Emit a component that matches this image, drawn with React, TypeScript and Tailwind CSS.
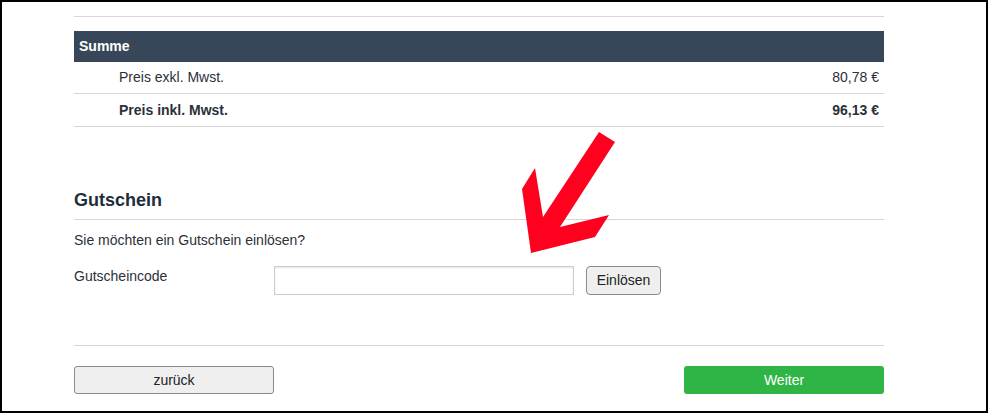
import React from 'react';

const font = { fontFamily: '"Liberation Sans", Arial, Helvetica, sans-serif' };

function Arrow() {
  return (
    <svg
      className="absolute left-0 top-0 pointer-events-none"
      width={991}
      height={413}
      viewBox="0 0 991 413"
    >
      <polygon
        fill="#ff001e"
        points="599,132 615,142 560,227 609,215 595,237 531,253 522,189 535,168 543,217"
      />
    </svg>
  );
}

export default function App() {
  return (
    <div className="relative w-[991px] h-[413px] bg-white text-[#2b3039]" style={font}>
      <div className="w-[988px] h-[413px] border-2 border-black">
        <div className="ml-[72px] w-[810px]">
          {/* Summary table */}
          <div className="mt-[14px] border-t border-[#d6d6d6]" />
          <div className="mt-[14px] h-[31px] bg-[#374759] flex items-center px-[5px]">
            <span className="text-[14px] font-bold text-white">Summe</span>
          </div>
          <div className="h-[32px] border-b border-[#d6d6d6] flex items-center justify-between pl-[45px] pr-[5px] text-[14px]">
            <span>Preis exkl. Mwst.</span>
            <span>80,78 €</span>
          </div>
          <div className="h-[33px] border-b border-[#d6d6d6] flex items-center justify-between pl-[45px] pr-[5px] text-[14px] font-bold">
            <span>Preis inkl. Mwst.</span>
            <span>96,13 €</span>
          </div>

          {/* Voucher */}
          <h2 className="mt-[61px] pb-[7px] border-b border-[#d6d6d6] text-[18px] leading-[24px] font-bold text-[#1f2d3b]">
            Gutschein
          </h2>
          <p className="mt-[10px] text-[14px] leading-[20px]">Sie möchten ein Gutschein einlösen?</p>
          <div className="mt-[16px] flex items-center text-[14px]">
            <label className="w-[200px] -mt-[9px]">Gutscheincode</label>
            <input
              type="text"
              className="w-[300px] h-[29px] border border-[#cccccc] bg-white shadow-[inset_0_1px_2px_rgba(0,0,0,0.1)] outline-none px-2"
            />
            <button className="ml-[12px] w-[75px] h-[29px] rounded-[4px] border border-[#8a8a8a] bg-[#efefef] text-[14px] text-[#222]">
              Einlösen
            </button>
          </div>

          {/* Navigation */}
          <div className="mt-[50px] border-t border-[#d6d6d6]" />
          <div className="mt-[20px] flex justify-between">
            <button className="w-[200px] h-[28px] rounded-[3px] border border-[#8a8a8a] bg-[#efefef] text-[14px] text-[#222]">
              zurück
            </button>
            <button className="w-[200px] h-[28px] rounded-[3px] bg-[#2fb546] text-[14px] text-white">
              Weiter
            </button>
          </div>
        </div>
      </div>
      <Arrow />
    </div>
  );
}
